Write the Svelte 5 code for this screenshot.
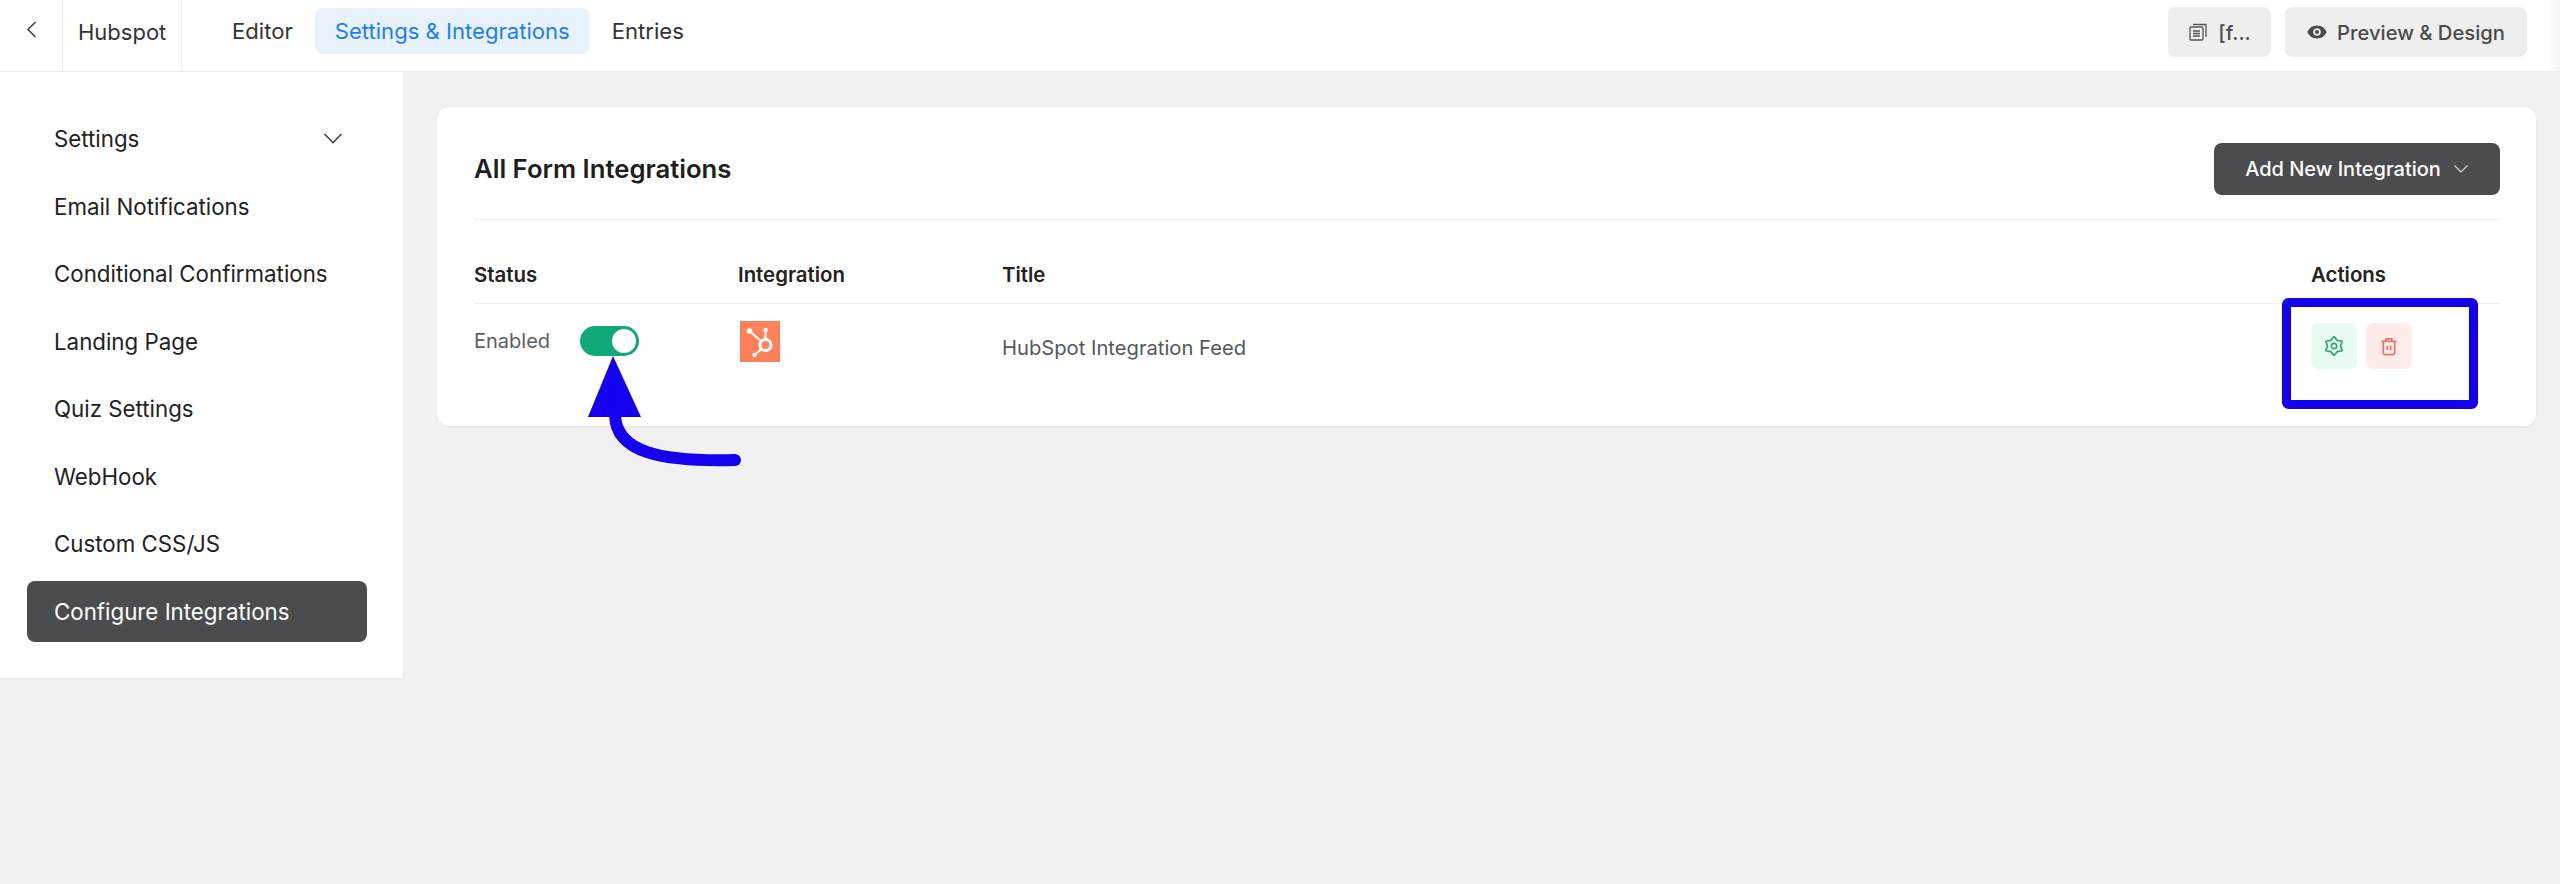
<script>
  const menu = ['Settings', 'Email Notifications', 'Conditional Confirmations', 'Landing Page', 'Quiz Settings', 'WebHook', 'Custom CSS/JS', 'Configure Integrations'];
</script>

<div class="page">
  <header class="topbar">
    <div class="left">
      <button class="back" aria-label="Back">
        <svg width="11" height="17" viewBox="0 0 11 17" fill="none" stroke="#444" stroke-width="1.6"><path d="M9.500 1 L2 8.500 L9.500 16" /></svg>
      </button>
      <div class="form-name">Hubspot</div>
      <nav class="tabs">
        <span class="tab">Editor</span>
        <span class="tab active">Settings &amp; Integrations</span>
        <span class="tab">Entries</span>
      </nav>
    </div>
    <div class="right">
      <button class="grey short">
        <svg width="20" height="20" viewBox="0 0 20 20" fill="none" stroke="#555" stroke-width="1.3">
          <rect x="2" y="5" width="13" height="13" rx="1" />
          <path d="M5 2.500 H18 V15" />
          <path d="M5 9 H12 M5 11.500 H12 M5 14 H12" />
        </svg>
        <span>[f...</span>
      </button>
      <button class="grey">
        <svg width="20" height="14" viewBox="0 0 20 14"><path fill="#4a4a4a" fill-rule="evenodd" d="M10 0.500C5.500 0.500 2 3.300 0.300 7 2 10.700 5.500 13.500 10 13.500S18 10.700 19.700 7C18 3.300 14.500 0.500 10 0.500ZM10 3.200A3.800 3.800 0 1 1 10 10.800 3.800 3.800 0 0 1 10 3.200ZM10 5A2 2 0 1 0 10 9 2 2 0 0 0 10 5Z" /></svg>
        <span>Preview &amp; Design</span>
      </button>
    </div>
  </header>

  <div class="content">
    <aside class="sidebar">
      {#each menu as item, i}
        <div class="item" class:selected={i === menu.length - 1}>
          <span>{item}</span>
          {#if i === 0}
            <svg width="20" height="11" viewBox="0 0 20 11" fill="none" stroke="#444" stroke-width="1.6"><path d="M1.500 1 L10 9.500 L18.500 1" /></svg>
          {/if}
        </div>
      {/each}
    </aside>

    <main class="main">
      <section class="card">
        <div class="card-head">
          <h2>All Form Integrations</h2>
          <button class="add">
            <span>Add New Integration</span>
            <svg width="16" height="10" viewBox="0 0 16 10" fill="none" stroke="#ddd" stroke-width="1.100"><path d="M1.500 1.500 L8 8 L14.500 1.500" /></svg>
          </button>
        </div>
        <div class="row head">
          <div>Status</div>
          <div>Integration</div>
          <div>Title</div>
          <div>Actions</div>
        </div>
        <div class="row body">
          <div class="status">
            <span>Enabled</span>
            <span class="toggle"><i></i></span>
          </div>
          <div>
            <svg class="logo" width="40" height="41" viewBox="0 0 40 41">
              <rect width="40" height="41" fill="#ff8059" />
              <g fill="none" stroke="#fff" stroke-width="2.200">
                <circle cx="25.500" cy="24" r="5.500" stroke-width="3" />
                <path d="M10 10.500 L21 20 M25.500 18 V10 M21 28.500 L15 33.500" />
              </g>
              <circle cx="9.500" cy="10" r="2.800" fill="#fff" />
              <circle cx="25.500" cy="9" r="2.200" fill="#fff" />
              <circle cx="14.500" cy="34" r="2.200" fill="#fff" />
            </svg>
          </div>
          <div class="feed">HubSpot Integration Feed</div>
          <div class="actions">
            <button class="act green" aria-label="Settings">
              <svg width="20" height="20" viewBox="0 0 20 20" fill="none" stroke="#2fa874" stroke-width="1.700" stroke-linejoin="round">
                <path d="M10 0.500 L13.250 4.370 L18.200 5.250 L16.500 10 L18.200 14.750 L13.250 15.630 L10 19.500 L6.750 15.630 L1.800 14.750 L3.500 10 L1.800 5.250 L6.750 4.370 Z" />
                <circle cx="10" cy="10" r="2.700" />
              </svg>
            </button>
            <button class="act red" aria-label="Delete">
              <svg width="18" height="19" viewBox="0 0 18 20" fill="none" stroke="#e4766c" stroke-width="1.800">
                <path d="M1 4.500 H17 M6 4.500 V2 H12 V4.500" />
                <path d="M3 4.500 V16.500 Q3 18.500 5 18.500 H13 Q15 18.500 15 16.500 V4.500" />
                <path d="M7.300 9 V14 M10.700 9 V14" />
              </svg>
            </button>
          </div>
        </div>
      </section>
    </main>
  </div>

  <div class="edge"></div>

  <!-- hand drawn annotations lying over the screenshot -->
  <svg class="marks" width="2560" height="884" viewBox="0 0 2560 884" fill="none">
    <path d="M613 356 L641 417 H588 Z" fill="#1500ee" />
    <path d="M615 415 C616 452 660 462 735 460" stroke="#1500ee" stroke-width="12" stroke-linecap="round" />
    <rect x="2286.500" y="302.500" width="187" height="102" rx="2" stroke="#1500ee" stroke-width="9" />
  </svg>
</div>

<style>
  :global(body) {
    margin: 0;
    background: #f1f1f1;
  }

  .page {
    position: relative;
    height: 884px;
    overflow: hidden;
    font-family: Inter, "Liberation Sans", sans-serif;
    color: #1f1f1f;
  }

  button {
    font-family: inherit;
    border: 0;
  }

  .topbar {
    height: 71px;
    background: #fff;
    border-bottom: 1px solid #ebebeb;
    display: flex;
    justify-content: space-between;
    align-items: stretch;
    padding-right: 33px;
  }

  .left, .right {
    display: flex;
    align-items: center;
  }

  .back {
    width: 63px;
    height: 100%;
    padding: 0 0 9px 0;
    background: none;
    border-right: 1px solid #efefef;
    flex-shrink: 0;
  }

  .form-name {
    width: 103px;
    padding: 0 0 7px 15px;
    box-sizing: content-box;
    height: 64px;
    border-right: 1px solid #efefef;
    display: flex;
    align-items: center;
    font-size: 22px;
    color: #333;
    flex-shrink: 0;
  }

  .tabs {
    display: flex;
    align-items: center;
    gap: 2px;
    margin-left: 30px;
    margin-top: -9px;
  }

  .tab {
    padding: 0 20px;
    height: 46px;
    line-height: 46px;
    font-size: 22.100px;
    color: #333;
    border-radius: 8px;
  }

  .tab.active {
    background: #e8f2fd;
    color: #1a7efb;
  }

  .right {
    gap: 14px;
    margin-top: -7px;
  }

  .grey {
    height: 50px;
    width: 242px;
    border-radius: 8px;
    background: #eeeeee;
    color: #4a4a4a;
    font-size: 20.200px;
    font-weight: 500;
    display: flex;
    align-items: center;
    justify-content: center;
    gap: 10px;
  }

  .grey.short {
    width: 103px;
  }

  .content {
    display: flex;
    align-items: flex-start;
  }

  .sidebar {
    width: 403px;
    box-sizing: border-box;
    background: #fff;
    padding: 36px 36px 36px 27px;
    display: flex;
    flex-direction: column;
    gap: 6.500px;
    box-shadow: 0 1px 2px rgba(0, 0, 0, 0.04);
  }

  .item {
    height: 61px;
    padding: 0 24px 0 27px;
    display: flex;
    align-items: center;
    justify-content: space-between;
    font-size: 22.300px;
    color: #222;
    border-radius: 8px;
  }

  .item.selected {
    background: #4b4c4d;
    color: #fff;
  }

  .main {
    flex: 1;
    padding: 35px 24px 0 34px;
  }

  .card {
    background: #fff;
    border-radius: 12px;
    height: 319px;
    box-sizing: border-box;
    padding: 0 36px 0 37px;
    box-shadow: 0 1px 3px rgba(0, 0, 0, 0.05);
  }

  .card-head {
    height: 113px;
    display: flex;
    align-items: center;
    justify-content: space-between;
    border-bottom: 1px solid #ececec;
    padding-top: 11px;
    box-sizing: border-box;
  }

  h2 {
    margin: 0;
    font-size: 25.700px;
    font-weight: 600;
    color: #1e1f21;
  }

  .add {
    width: 286px;
    height: 52px;
    border-radius: 8px;
    background: #4b4c4d;
    color: #fff;
    font-size: 20px;
    font-weight: 500;
    display: flex;
    align-items: center;
    justify-content: center;
    gap: 12px;
  }

  .row {
    display: grid;
    grid-template-columns: 264px 264px 1309px 1fr;
  }

  .row.head {
    height: 84px;
    align-items: end;
    padding-bottom: 16px;
    box-sizing: border-box;
    border-bottom: 1px solid #ececec;
    font-size: 20.400px;
    font-weight: 600;
    color: #222;
  }

  .row.body {
    padding-top: 19px;
  }

  .status {
    display: flex;
    align-items: center;
    gap: 30px;
    height: 30px;
    margin-top: 3px;
    font-size: 20px;
    color: #5b5e63;
  }

  .toggle {
    width: 59px;
    height: 30px;
    border-radius: 15px;
    background: #0fa97a;
    display: flex;
    align-items: center;
    justify-content: flex-end;
    padding-right: 3px;
    box-sizing: border-box;
  }

  .toggle i {
    width: 24px;
    height: 24px;
    border-radius: 50%;
    background: #fff;
  }

  .logo {
    display: block;
    margin: -2px 0 0 2px;
  }

  .feed {
    font-size: 20.200px;
    color: #55585c;
    padding-top: 12px;
  }

  .actions {
    display: flex;
    gap: 9px;
  }

  .act {
    width: 46px;
    height: 46px;
    border-radius: 7px;
    padding: 0;
    display: flex;
    align-items: center;
    justify-content: center;
  }

  .act.green {
    background: #e8fbf0;
  }

  .act.red {
    background: #ffecea;
  }

  .edge {
    position: absolute;
    top: 0;
    right: 0;
    bottom: 0;
    width: 10px;
    background: linear-gradient(90deg, rgba(243, 243, 243, 0.3), rgba(243, 243, 243, 0.8));
  }

  .marks {
    position: absolute;
    left: 0;
    top: 0;
    pointer-events: none;
  }
</style>
